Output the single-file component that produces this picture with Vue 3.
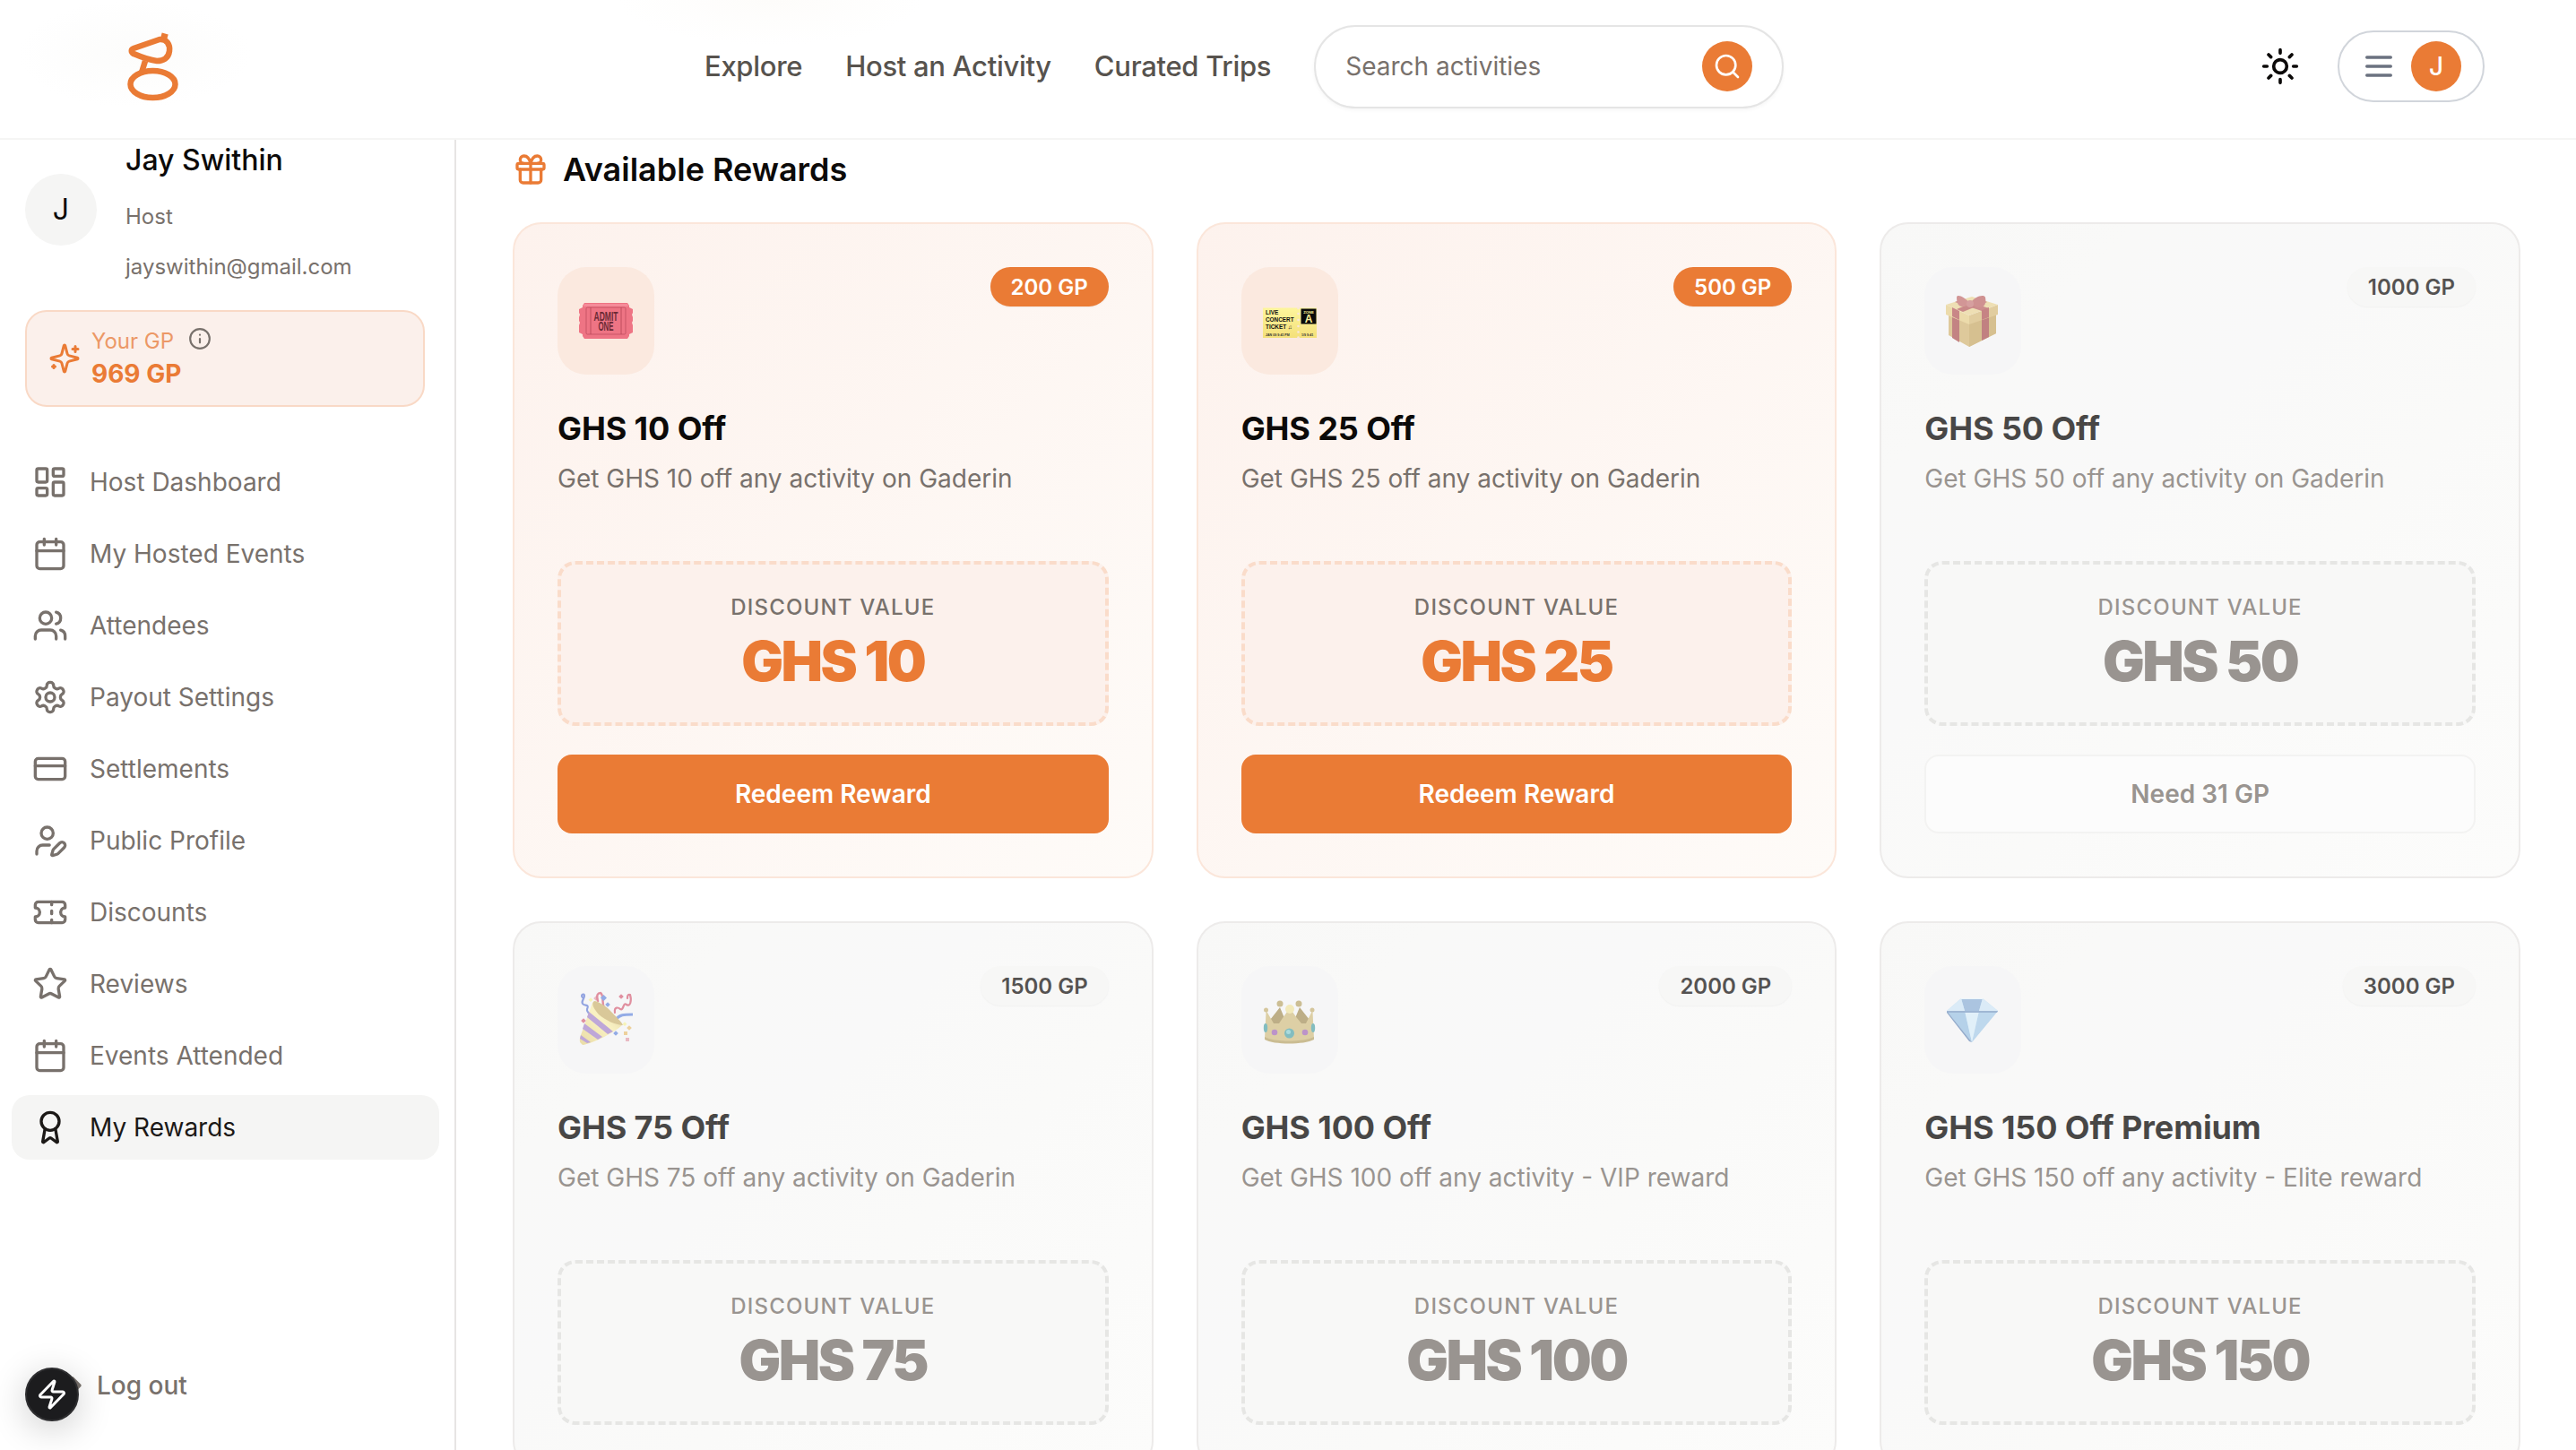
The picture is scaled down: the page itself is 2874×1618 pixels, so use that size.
<script setup>
const icons = {
  dashboard: '<rect x="3" y="3" width="7" height="9" rx="1"/><rect x="14" y="3" width="7" height="5" rx="1"/><rect x="14" y="12" width="7" height="9" rx="1"/><rect x="3" y="16" width="7" height="5" rx="1"/>',
  calendar: '<path d="M8 2v4M16 2v4"/><rect x="3" y="4" width="18" height="18" rx="2"/><path d="M3 10h18"/>',
  users: '<path d="M16 21v-2a4 4 0 0 0-4-4H6a4 4 0 0 0-4 4v2"/><circle cx="9" cy="7" r="4"/><path d="M22 21v-2a4 4 0 0 0-3-3.87"/><path d="M16 3.13a4 4 0 0 1 0 7.75"/>',
  settings: '<path d="M12.22 2h-.44a2 2 0 0 0-2 2v.18a2 2 0 0 1-1 1.73l-.43.25a2 2 0 0 1-2 0l-.15-.08a2 2 0 0 0-2.73.73l-.22.38a2 2 0 0 0 .73 2.73l.15.1a2 2 0 0 1 1 1.72v.51a2 2 0 0 1-1 1.74l-.15.09a2 2 0 0 0-.73 2.73l.22.38a2 2 0 0 0 2.73.73l.15-.08a2 2 0 0 1 2 0l.43.25a2 2 0 0 1 1 1.73V20a2 2 0 0 0 2 2h.44a2 2 0 0 0 2-2v-.18a2 2 0 0 1 1-1.73l.43-.25a2 2 0 0 1 2 0l.15.08a2 2 0 0 0 2.73-.73l.22-.39a2 2 0 0 0-.73-2.73l-.15-.08a2 2 0 0 1-1-1.74v-.5a2 2 0 0 1 1-1.74l.15-.09a2 2 0 0 0 .73-2.73l-.22-.38a2 2 0 0 0-2.73-.73l-.15.08a2 2 0 0 1-2 0l-.43-.25a2 2 0 0 1-1-1.73V4a2 2 0 0 0-2-2z"/><circle cx="12" cy="12" r="3"/>',
  card: '<rect x="2" y="5" width="20" height="14" rx="2"/><path d="M2 10h20"/>',
  userPen: '<path d="M11.5 15H7a4 4 0 0 0-4 4v2"/><path d="M21.378 16.626a1 1 0 0 0-3.004-3.004l-4.01 4.012a2 2 0 0 0-.506.854l-.837 2.87a.5.5 0 0 0 .62.62l2.87-.837a2 2 0 0 0 .854-.506z"/><circle cx="10" cy="7" r="4"/>',
  ticket: '<path d="M2 9a3 3 0 0 1 0 6v2a2 2 0 0 0 2 2h16a2 2 0 0 0 2-2v-2a3 3 0 0 1 0-6V7a2 2 0 0 0-2-2H4a2 2 0 0 0-2 2Z"/><path d="M13 5v2M13 17v2M13 11v2"/>',
  star: '<path d="M11.525 2.295a.53.53 0 0 1 .95 0l2.31 4.679a2.123 2.123 0 0 0 1.595 1.16l5.166.756a.53.53 0 0 1 .294.904l-3.736 3.638a2.123 2.123 0 0 0-.611 1.878l.882 5.14a.53.53 0 0 1-.771.56l-4.618-2.428a2.122 2.122 0 0 0-1.973 0L6.396 21.01a.53.53 0 0 1-.77-.56l.881-5.139a2.122 2.122 0 0 0-.611-1.879L2.16 9.795a.53.53 0 0 1 .294-.906l5.165-.755a2.122 2.122 0 0 0 1.597-1.16z"/>',
  award: '<path d="m15.477 12.89 1.515 8.526a.5.5 0 0 1-.81.47l-3.58-2.687a1 1 0 0 0-1.197 0l-3.586 2.686a.5.5 0 0 1-.81-.469l1.514-8.526"/><circle cx="12" cy="8" r="6"/>',
  gift: '<rect x="3" y="8" width="18" height="4" rx="1"/><path d="M12 8v13"/><path d="M19 12v7a2 2 0 0 1-2 2H7a2 2 0 0 1-2-2v-7"/><path d="M7.5 8a2.5 2.5 0 0 1 0-5A4.8 8 0 0 1 12 8a4.8 8 0 0 1 4.5-5 2.5 2.5 0 0 1 0 5"/>',
  sparkles: '<path d="M9.937 15.5A2 2 0 0 0 8.5 14.063l-6.135-1.582a.5.5 0 0 1 0-.962L8.5 9.936A2 2 0 0 0 9.937 8.5l1.582-6.135a.5.5 0 0 1 .963 0L14.063 8.5A2 2 0 0 0 15.5 9.937l6.135 1.581a.5.5 0 0 1 0 .964L15.5 14.063a2 2 0 0 0-1.437 1.437l-1.582 6.135a.5.5 0 0 1-.963 0z"/><path d="M20 3v4M22 5h-4M4 17v2M5 18H3"/>',
  info: '<circle cx="12" cy="12" r="10"/><path d="M12 16v-4M12 8h.01"/>',
  search: '<circle cx="11" cy="11" r="8"/><path d="m21 21-4.3-4.3"/>',
  sun: '<circle cx="12" cy="12" r="4"/><path d="M12 2v2M12 20v2M4.93 4.93l1.41 1.41M17.66 17.66l1.41 1.41M2 12h2M20 12h2M6.34 17.66l-1.41 1.41M19.07 4.93l-1.41 1.41"/>',
  menu: '<path d="M4 6h16M4 12h16M4 18h16"/>',
  zap: '<path d="M4 14a1 1 0 0 1-.78-1.63l9.9-10.2a.5.5 0 0 1 .86.46l-1.92 6.02A1 1 0 0 0 13 10h7a1 1 0 0 1 .78 1.63l-9.9 10.2a.5.5 0 0 1-.86-.46l1.92-6.02A1 1 0 0 0 11 14z"/>',
  logout: '<path d="M9 21H5a2 2 0 0 1-2-2V5a2 2 0 0 1 2-2h4"/><path d="m16 17 5-5-5-5M21 12H9"/>'
}

const art = {
  admit: `<path d="M6 10H54L56 13V15L60 17V21L59 23 60 26V30L59 32 60 35V43L56 45V47L54 50H6L4 47V45L0 43V35L1 32 0 30V26L1 23 0 21V17L4 15V13Z" fill="#ee7484"/>
    <path d="M6 11H54L55 14H5Z" fill="#f58b99"/>
    <path d="M13 15V45M47 15V45" stroke="#b9495a" stroke-width=".9" fill="none"/>
    <rect x="8" y="15" width="44" height="30" rx="1.5" fill="none" stroke="#b9495a" stroke-width=".7"/>
    <text x="30" y="29.500" text-anchor="middle" textLength="27" lengthAdjust="spacingAndGlyphs" font-family="Liberation Sans" font-size="14" font-weight="700" fill="#6b2a35">ADMIT</text>
    <text x="30" y="40.500" text-anchor="middle" textLength="17" lengthAdjust="spacingAndGlyphs" font-family="Liberation Sans" font-size="14" font-weight="700" fill="#6b2a35">ONE</text>`,
  concert: `<defs><linearGradient id="tk" x1="0" y1="0" x2="0" y2="1"><stop offset="0" stop-color="#fdf59c"/><stop offset="1" stop-color="#f4e07a"/></linearGradient></defs>
    <g transform="translate(0 2)">
    <rect x="0" y="13.500" width="60" height="33.500" fill="url(#tk)"/>
    <text x="3" y="21" font-family="Liberation Sans" font-size="6.400" font-weight="700" fill="#111">LIVE</text>
    <text x="3" y="29" font-family="Liberation Sans" font-size="6.400" font-weight="700" fill="#111">CONCERT</text>
    <text x="3" y="37" font-family="Liberation Sans" font-size="6.400" font-weight="700" fill="#111">TICKET ♫</text>
    <text x="3" y="44.500" font-family="Liberation Sans" font-size="3.600" font-weight="700" fill="#333">JAN 09  9:41 PM</text>
    <text x="43" y="44.500" font-family="Liberation Sans" font-size="3.600" font-weight="700" fill="#333">1/9  9:41</text>
    <g fill="#f8e6dc"><circle cx="39.500" cy="14" r="1.300"/><circle cx="39.500" cy="20" r="1.300"/><circle cx="39.500" cy="27" r="1.300"/><circle cx="39.500" cy="34" r="1.300"/><circle cx="39.500" cy="40.500" r="1.300"/><circle cx="39.500" cy="46.500" r="1.300"/></g>
    <rect x="42.500" y="14.500" width="17" height="17" fill="#0a0a0a"/>
    <text x="51" y="19.500" text-anchor="middle" font-family="Liberation Sans" font-size="4.200" font-weight="700" fill="#fdf29a">ZONE</text>
    <text x="51" y="30" text-anchor="middle" font-family="Liberation Sans" font-size="12" font-weight="700" fill="#fdf29a">A</text>
    </g>`,
  gift: `<path d="M3 20 26 31 56 20V44L26 59 3 46Z" fill="#d4b77a"/>
    <path d="M26 33 56 22V44L26 59Z" fill="#c9ab6c"/>
    <path d="M7 24 15 28V54L7 49Z" fill="#b05a5a"/><path d="M40 28 48 25V48L40 52Z" fill="#ad5757"/>
    <path d="M0 12 26 24V34L0 23Z" fill="#e6cf90"/><path d="M26 24 58 12V23L26 34Z" fill="#d8bd7f"/>
    <path d="M0 12 29 3 58 12 26 24Z" fill="#e9d59c"/>
    <path d="M10 9 18 6 48 16 40 19Z" fill="#bc6868"/><path d="M38 6 46 9 19 20 12 17Z" fill="#b86262"/>
    <path d="M7 15 15 19V29L7 25Z" fill="#b86060"/><path d="M40 18 48 15V26L40 29Z" fill="#b45c5c"/>
    <path d="M27 11C20 2 12 0 12 4 12 8 13 14 18 14 22 14 25 13 27 11Z" fill="#c47474"/>
    <path d="M27 11C32 2 43 0 44 4 45 9 44 14 39 15 34 15 30 13 27 11Z" fill="#bf6d6d"/>
    <circle cx="27" cy="11" r="4" fill="#c97f7f"/>`,
  popper: `<defs><linearGradient id="cone" x1="0" y1="1" x2="1" y2="0"><stop offset="0" stop-color="#e3d189"/><stop offset=".55" stop-color="#f8eeb0"/><stop offset="1" stop-color="#d8c184"/></linearGradient></defs>
    <path d="M4 5C1 2 6 0 6 3 6 7 2 9 4 12 6 15 12 12 9 18 8 21 11 22 12 24" fill="none" stroke="#6f86d6" stroke-width="2.200" stroke-linecap="round"/>
    <path d="M21 9C19 2 21 0 24 0 27 1 26 8 27 13 28 17 27 20 28 23" fill="none" stroke="#d66a80" stroke-width="2.400" stroke-linecap="round"/>
    <path d="M41 30C45 24 50 24 60 24" fill="none" stroke="#6f90de" stroke-width="3"/>
    <path d="M40 22C39 15 44 16 46 18 50 20 49 10 53 13 57 16 59 9 57 2 54 1 54 4 54 6" fill="none" stroke="#d66a80" stroke-width="2.200" stroke-linecap="round"/>
    <path d="M2 56C0 54 1 50 2 47L15 11C17 8 21 9 24 12L42 28C46 31 49 35 48 36 40 44 14 57 4 58Z" fill="url(#cone)"/>
    <path d="M17 9C22 10 30 14 36 21 42 27 48 33 49 36 42 36 30 31 22 24 17 18 13 12 17 9Z" fill="#cdb678"/>
    <path d="M11 21 38 43 32 46 9 27Z" fill="#a98acb"/><path d="M6 34 26 49 21 52 4 40Z" fill="#a98acb"/><path d="M2 47 13 55 9 56 1 51Z" fill="#a98acb"/>
    <g fill="#6f90de"><rect x="25" y="3" width="5" height="5" transform="rotate(45 27.500 5.500)"/><rect x="30" y="11" width="4" height="4" transform="rotate(45 32 13)"/><rect x="39" y="43" width="4" height="4" transform="rotate(45 41 45)"/></g>
    <g fill="#d66a80"><rect x="17" y="4" width="4" height="4" opacity=".6" transform="rotate(45 19 6)"/><rect x="45" y="2" width="4" height="4" transform="rotate(45 47 4)"/><rect x="3" y="29" width="4" height="4" transform="rotate(45 5 31)"/><rect x="52" y="50" width="4" height="4" opacity=".6"/></g>
    <g fill="#e8c27b"><rect x="54" y="37" width="4" height="4" transform="rotate(45 56 39)"/><rect x="50" y="43" width="4" height="4"/></g>
    <rect x="11" y="6" width="3.500" height="3.500" fill="#f5f0a0" transform="rotate(45 13 8)"/><rect x="49" y="33" width="3.500" height="3.500" fill="#f5f0a0" transform="rotate(45 51 35)"/>`,
  crown: `<path d="M14 46 8 30 19 16 24 28 30 20 36 28 41 16 52 30 46 46Z" fill="#a8945f"/>
    <path d="M2 51 3.500 21H4.500L12 34 18 34 22 28 30 17 38 28 43 34 48 34 54.500 21H55.500L57 51C46 57 12 57 2 51Z" fill="#d2c088"/>
    <path d="M2 49C12 55 46 55 57 49L57 52C46 58 12 58 2 52Z" fill="#b9a66e"/>
    <circle cx="3.500" cy="19" r="2.500" fill="#c7b47c"/><circle cx="55" cy="19" r="2.500" fill="#c7b47c"/>
    <circle cx="19" cy="12" r="3.500" fill="#bca971"/><circle cx="40" cy="12" r="3.500" fill="#bca971"/><circle cx="30" cy="18" r="5" fill="#eee2a4"/>
    <circle cx="29.500" cy="45" r="5.500" fill="#5aa8ac"/><circle cx="28.500" cy="43.500" r="2.500" fill="#8fd0d2"/>
    <circle cx="13" cy="44" r="3.300" fill="#a670b8"/><circle cx="47" cy="44" r="3.300" fill="#a670b8"/>
    <ellipse cx="3" cy="39" rx="2.200" ry="5" fill="#5aa8ac"/><ellipse cx="56" cy="39" rx="2.200" ry="5" fill="#5aa8ac"/>`,
  diamond: `<path d="M1 20 17 6H41L58 20 29 55Z" fill="#b7d6ee"/>
    <path d="M17 6H41L37 20H21Z" fill="#8fb1d6"/>
    <path d="M17 6 21 20H1Z" fill="#cfe5f5"/><path d="M41 6 37 20H58Z" fill="#cfe5f5"/>
    <path d="M1 20H21L29 55Z" fill="#9dc2e2"/><path d="M58 20H37L29 55Z" fill="#a9cbe8"/>
    <path d="M21 20H37L29 55Z" fill="#d8ecf8"/>
    <path d="M1 20H58L57 22H2Z" fill="#7f9fc6"/><path d="M1 20 29 55 26 54 1 22Z" fill="#6f8fbb"/>
    <path d="M17 6H41L42 7H16Z" fill="#e6f2fa"/>`
}

const nav = [
  { label: 'Host Dashboard', icon: 'dashboard' },
  { label: 'My Hosted Events', icon: 'calendar' },
  { label: 'Attendees', icon: 'users' },
  { label: 'Payout Settings', icon: 'settings' },
  { label: 'Settlements', icon: 'card' },
  { label: 'Public Profile', icon: 'userPen' },
  { label: 'Discounts', icon: 'ticket' },
  { label: 'Reviews', icon: 'star' },
  { label: 'Events Attended', icon: 'calendar' },
  { label: 'My Rewards', icon: 'award', active: true }
]

const rewards = [
  { title: 'GHS 10 Off', desc: 'Get GHS 10 off any activity on Gaderin', value: 'GHS 10', gp: '200 GP', art: 'admit', open: true, action: 'Redeem Reward' },
  { title: 'GHS 25 Off', desc: 'Get GHS 25 off any activity on Gaderin', value: 'GHS 25', gp: '500 GP', art: 'concert', open: true, action: 'Redeem Reward' },
  { title: 'GHS 50 Off', desc: 'Get GHS 50 off any activity on Gaderin', value: 'GHS 50', gp: '1000 GP', art: 'gift', action: 'Need 31 GP' },
  { title: 'GHS 75 Off', desc: 'Get GHS 75 off any activity on Gaderin', value: 'GHS 75', gp: '1500 GP', art: 'popper' },
  { title: 'GHS 100 Off', desc: 'Get GHS 100 off any activity - VIP reward', value: 'GHS 100', gp: '2000 GP', art: 'crown' },
  { title: 'GHS 150 Off Premium', desc: 'Get GHS 150 off any activity - Elite reward', value: 'GHS 150', gp: '3000 GP', art: 'diamond' }
]
</script>

<template>
  <div class="app">
    <header class="topbar">
      <svg class="logo" viewBox="140 34 62 80" fill="none" stroke="#ea7b35" stroke-width="6.5" stroke-linejoin="round">
        <path d="M149 54 178 44C186 43 190 50 189 57 188 65 182 68 175 68 165 67 156 63 149 60 146 58 146 55 149 54Z" />
        <path d="M162 68 158 81" />
        <ellipse cx="170.500" cy="94" rx="25" ry="15" />
        <path d="M180 39 187 41" stroke-width="5" />
      </svg>
      <nav class="links">
        <a>Explore</a>
        <a>Host an Activity</a>
        <a>Curated Trips</a>
      </nav>
      <div class="search">
        <span>Search activities</span>
        <span class="search-btn">
          <svg class="ic-search" viewBox="0 0 24 24" v-html="icons.search"></svg>
        </span>
      </div>
      <div class="right">
        <svg class="ic-sun" viewBox="0 0 24 24" v-html="icons.sun"></svg>
        <div class="menu-pill">
          <svg class="ic-menu" viewBox="0 0 24 24" v-html="icons.menu"></svg>
          <span class="mini-avatar">J</span>
        </div>
      </div>
    </header>

    <div class="body">
      <aside class="sidebar">
        <div class="profile">
          <div class="avatar">J</div>
          <div class="who">
            <div class="name">Jay Swithin</div>
            <div class="role">Host</div>
            <div class="email">jayswithin@gmail.com</div>
          </div>
        </div>

        <div class="gp">
          <svg class="ic-spark" viewBox="0 0 24 24" v-html="icons.sparkles"></svg>
          <div>
            <div class="gp-label">
              <span>Your GP</span>
              <svg class="ic-info" viewBox="0 0 24 24" v-html="icons.info"></svg>
            </div>
            <div class="gp-value">969 GP</div>
          </div>
        </div>

        <ul class="menu">
          <li v-for="item in nav" :key="item.label" class="item" :class="{ active: item.active }">
            <svg class="ic" viewBox="0 0 24 24" v-html="icons[item.icon]"></svg>
            <span>{{ item.label }}</span>
          </li>
        </ul>

        <div class="logout">
          <svg class="ic" viewBox="0 0 24 24" v-html="icons.logout"></svg>
          <span>Log out</span>
        </div>
        <div class="fab">
          <svg viewBox="0 0 24 24" v-html="icons.zap"></svg>
        </div>
      </aside>

      <main class="main">
        <h2 class="heading">
          <svg class="ic-gift" viewBox="0 0 24 24" v-html="icons.gift"></svg>
          <span>Available Rewards</span>
        </h2>
        <div class="grid">
          <article v-for="r in rewards" :key="r.title" class="reward" :class="r.open ? 'open' : 'locked'">
            <div class="top">
              <div class="emoji">
                <svg viewBox="0 0 60 60" v-html="art[r.art]"></svg>
              </div>
              <span class="badge">{{ r.gp }}</span>
            </div>
            <h3 class="title">{{ r.title }}</h3>
            <p class="desc">{{ r.desc }}</p>
            <div class="box">
              <div class="box-label">DISCOUNT VALUE</div>
              <div class="box-value">{{ r.value }}</div>
            </div>
            <button v-if="r.action" class="cta">{{ r.action }}</button>
          </article>
        </div>
      </main>
    </div>
  </div>
</template>

<style scoped>
.app {
  height: 1618px;
  overflow: hidden;
  background: #fff;
  font-family: Inter, "Noto Sans", sans-serif;
  color: #0c0a09;
  display: flex;
  flex-direction: column;
}
svg { display: block; }

.topbar {
  height: 156px;
  flex: none;
  box-sizing: border-box;
  display: flex;
  align-items: center;
  padding: 0 102px 6px 140px;
  border-bottom: 2px solid #f5f5f4;
  background:
    radial-gradient(ellipse 170px 50px at 860px 0, #fdfcfa, transparent),
    radial-gradient(ellipse 130px 60px at 150px 60px, #fcfcfb, transparent),
    #fff;
}
.logo { width: 62px; height: 80px; margin-top: 0; }
.links {
  display: flex;
  gap: 48px;
  margin-left: 584px;
  margin-bottom: 2px;
  font-size: 31px;
  font-weight: 500;
  color: #57534e;
  letter-spacing: -0.3px;
}
.search {
  margin-left: 48px;
  width: 524px;
  height: 93px;
  box-sizing: border-box;
  border: 2px solid #e5e5e5;
  border-radius: 47px;
  box-shadow: 0 2px 4px rgba(0, 0, 0, 0.04);
  display: flex;
  align-items: center;
  justify-content: space-between;
  padding: 0 33px;
  font-size: 28px;
  color: #78716c;
}
.search-btn {
  width: 56px;
  height: 56px;
  border-radius: 50%;
  background: #ea7b35;
  display: flex;
  align-items: center;
  justify-content: center;
}
.ic-search { width: 32px; height: 32px; fill: none; stroke: #fff; stroke-width: 2; stroke-linecap: round; stroke-linejoin: round; }
.right {
  margin-left: auto;
  display: flex;
  align-items: center;
  gap: 42px;
}
.ic-sun { width: 44px; height: 44px; fill: none; stroke: #0c0a09; stroke-width: 2; stroke-linecap: round; stroke-linejoin: round; }
.menu-pill {
  width: 164px;
  height: 80px;
  box-sizing: border-box;
  border: 2px solid #d1d5db;
  border-radius: 40px;
  display: flex;
  align-items: center;
  justify-content: space-between;
  padding: 0 24px 0 24px;
}
.ic-menu { width: 40px; height: 40px; fill: none; stroke: #6b7280; stroke-width: 2; stroke-linecap: round; }
.mini-avatar {
  width: 56px;
  height: 56px;
  border-radius: 50%;
  background: #ea7b35;
  color: #fff;
  font-size: 28px;
  font-weight: 500;
  display: flex;
  align-items: center;
  justify-content: center;
}

.body {
  flex: 1;
  min-height: 0;
  display: flex;
}
.sidebar {
  position: relative;
  width: 509px;
  flex: none;
  box-sizing: border-box;
  border-right: 2px solid #e7e5e4;
  display: flex;
  flex-direction: column;
}
.profile {
  display: flex;
  align-items: center;
  gap: 32px;
  padding-left: 28px;
  margin-top: -3px;
}
.avatar {
  width: 80px;
  height: 80px;
  border-radius: 50%;
  background: #f5f5f4;
  font-size: 32px;
  font-weight: 400;
  display: flex;
  align-items: center;
  justify-content: center;
}
.name { font-size: 32px; font-weight: 500; line-height: 48px; padding-top: 2px; }
.role { font-size: 24px; line-height: 32px; color: #78716c; margin-top: 23px; }
.email { font-size: 24px; line-height: 32px; color: #78716c; margin-top: 24px; }

.gp {
  margin: 32px 33px 0 28px;
  height: 108px;
  box-sizing: border-box;
  border: 2px solid #f9d9c6;
  border-radius: 24px;
  background: #fbf0eb;
  display: flex;
  align-items: center;
  gap: 12px;
  padding: 0 0 3px 24px;
}
.ic-spark { width: 36px; height: 36px; margin-top: 3px; fill: none; stroke: #ea7b35; stroke-width: 2; stroke-linecap: round; stroke-linejoin: round; }
.gp-label {
  display: flex;
  align-items: center;
  gap: 16px;
  font-size: 24px;
  line-height: 36px;
  color: #ec9866;
}
.ic-info { width: 26px; height: 26px; margin-top: -6px; fill: none; stroke: #78716c; stroke-width: 2; stroke-linecap: round; }
.gp-value { font-size: 28px; line-height: 36px; font-weight: 700; color: #ea7b35; }

.menu {
  list-style: none;
  margin: 48px 0 0;
  padding: 0 17px 0 13px;
  display: flex;
  flex-direction: column;
  gap: 8px;
}
.item {
  height: 72px;
  border-radius: 20px;
  display: flex;
  align-items: center;
  gap: 24px;
  padding-left: 23px;
  font-size: 28px;
  color: #78716c;
}
.item.active { background: #f5f5f4; color: #1c1917; }
.ic { width: 40px; height: 40px; flex: none; fill: none; stroke: currentColor; stroke-width: 2; stroke-linecap: round; stroke-linejoin: round; }
.logout {
  margin-top: auto;
  margin-bottom: 36px;
  height: 72px;
  display: flex;
  align-items: center;
  gap: 14px;
  padding-left: 54px;
  font-size: 28px;
  font-weight: 500;
  color: #78716c;
}
.fab {
  position: absolute;
  left: 28px;
  bottom: 32px;
  width: 60px;
  height: 60px;
  border-radius: 50%;
  background: #1c1c1e;
  border: 2px solid #2e2e30;
  box-sizing: border-box;
  box-shadow: 0 8px 40px rgba(0, 0, 0, 0.2);
  display: flex;
  align-items: center;
  justify-content: center;
}
.fab svg { width: 36px; height: 36px; fill: none; stroke: #fff; stroke-width: 2; stroke-linejoin: round; }

.main {
  flex: 1;
  min-width: 0;
  padding: 9px 62px 0 63px;
}
.heading {
  margin: 0 0 35px;
  display: flex;
  align-items: center;
  gap: 16px;
  font-size: 36px;
  line-height: 48px;
  font-weight: 600;
}
.ic-gift { width: 40px; height: 40px; fill: none; stroke: #ea7b35; stroke-width: 2; stroke-linecap: round; stroke-linejoin: round; }
.grid {
  display: grid;
  grid-template-columns: repeat(3, 1fr);
  gap: 48px;
}
.reward {
  box-sizing: border-box;
  border: 2px solid;
  border-radius: 32px;
  padding: 48px;
}
.reward.open {
  border-color: #fbe6da;
  background: linear-gradient(135deg, #fdf2ed, #fefbf8);
}
.reward.locked {
  border-color: #e7e5e4;
  background: linear-gradient(135deg, #f6f6f5, #fbfbfa);
  opacity: 0.75;
}
.top { display: flex; justify-content: space-between; align-items: flex-start; }
.emoji {
  width: 108px;
  height: 120px;
  border-radius: 32px;
  display: flex;
  align-items: center;
  justify-content: center;
}
.emoji svg { width: 60px; height: 60px; overflow: visible; }
.open .emoji { background: #fbe9df; }
.locked .emoji { background: #f4f4f5; }
.badge {
  height: 44px;
  padding: 0 23px;
  border-radius: 22px;
  font-size: 24px;
  font-weight: 600;
  display: flex;
  align-items: center;
}
.open .badge { background: #ea7b35; color: #fff; box-shadow: 0 1px 2px rgba(0, 0, 0, 0.05); }
.locked .badge { background: #f5f5f4; color: #1c1917; box-shadow: 0 1px 2px rgba(0, 0, 0, 0.05); }
.title {
  margin: 32px 0 0;
  font-size: 36px;
  line-height: 56px;
  font-weight: 700;
  letter-spacing: -0.1px;
}
.desc {
  margin: 8px 0 0;
  min-height: 80px;
  font-size: 28px;
  line-height: 40px;
  color: #78716c;
}
.box {
  margin-top: 32px;
  height: 184px;
  box-sizing: border-box;
  border: 4px dashed;
  border-radius: 20px;
  padding-top: 32px;
  text-align: center;
}
.open .box { border-color: #fadcca; background: #fcf1ec; }
.locked .box { border-color: #dededc; background: #f6f6f5; }
.box-label {
  font-size: 24px;
  line-height: 32px;
  font-weight: 500;
  letter-spacing: 1.2px;
  color: #78716c;
}
.box-value {
  margin-top: 8px;
  font-size: 62px;
  line-height: 72px;
  font-weight: 900;
  letter-spacing: -2.5px;
}
.open .box-value { color: #ea7b35; }
.locked .box-value { color: #78716c; }
.cta {
  display: block;
  width: 100%;
  height: 88px;
  margin-top: 32px;
  box-sizing: border-box;
  border-radius: 16px;
  font-family: inherit;
  font-size: 28px;
  font-weight: 600;
}
.open .cta { background: #ea7b35; border: 0; color: #fff; }
.locked .cta { background: #fcfcfb; border: 2px solid #f0efee; color: #78716c; }
</style>
